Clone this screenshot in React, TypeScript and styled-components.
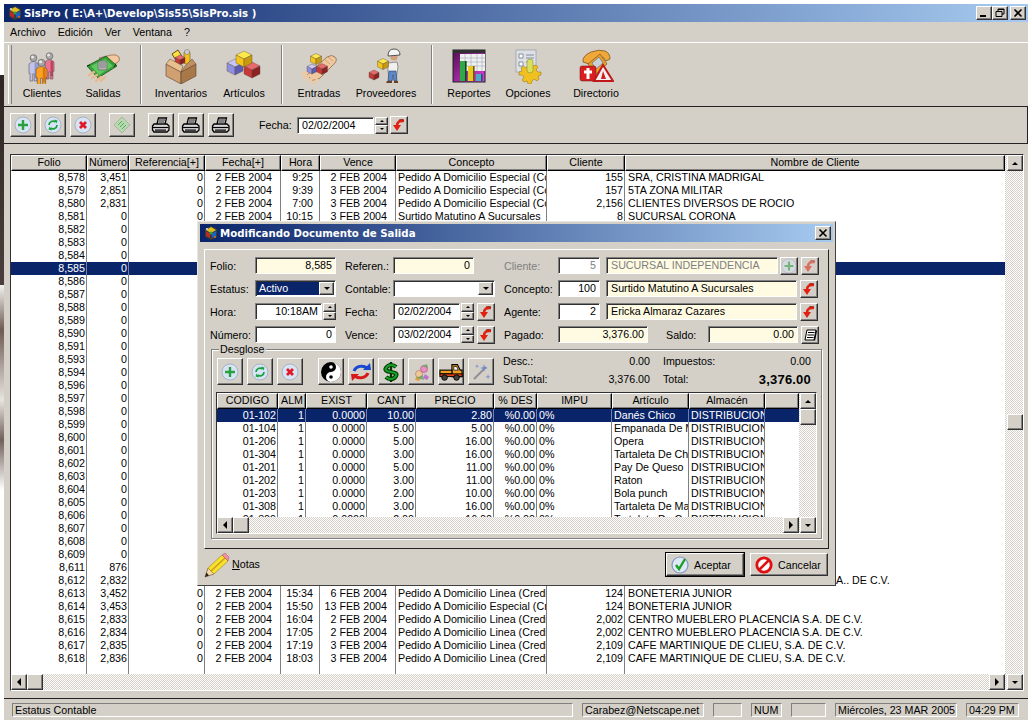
import React from "react";
import styled, { createGlobalStyle, css } from "styled-components";
import type { ReactNode } from "react";

const GRAY = "#d4d0c8";
const NAVY = "#0a246a";
const CREAM = "#fffbe3";

const GlobalStyle = createGlobalStyle`
  html, body { margin: 0; padding: 0; background: #fff; }
  body { font-family: "Liberation Sans", Arial, sans-serif; font-size: 10.7px; color: #000; }
  * { box-sizing: border-box; }
`;

const raised = css`
  border: 1px solid;
  border-color: #fff #303030 #303030 #fff;
  box-shadow: inset -1px -1px 0 #808080;
  background-color: ${GRAY};
`;

const sunken = css`
  border: 1px solid;
  border-color: #808080 #fff #fff #808080;
  box-shadow: inset 1px 1px 0 #303030;
`;

const hatch = css`
  background: conic-gradient(#fff 25%, ${GRAY} 0 50%, #fff 0 75%, ${GRAY} 0) 0 0 / 2px 2px;
`;

const Desktop = styled.div`
  position: relative;
  width: 1032px;
  height: 723px;
  overflow: hidden;
  padding: 4px 4px 3px 4px;
  background: linear-gradient(to bottom, #fff 75px, #2e2624 75px, #4a3f3c 285px, #f4f2f0 285px, #6d5a52 330px, #e8e4e0 400px, #70605a 440px, #fff 490px) 0 0 / 4px 100% no-repeat, #fff;
`;

const Window = styled.div`
  width: 1024px;
  height: 716px;
  background: ${GRAY};
  display: flex;
  flex-direction: column;
`;

const TitleBar = styled.div`
  height: 18px;
  flex: none;
  display: flex;
  align-items: center;
  gap: 1px;
  padding: 0 2px 0 3px;
  background: linear-gradient(to right, ${NAVY}, #a6caf0);
`;

const TitleText = styled.span`
  flex: 1;
  color: #fff;
  font: bold 10.2px "DejaVu Sans", Verdana, sans-serif;
  white-space: nowrap;
`;

const CaptionGroup = styled.div`
  display: flex;
`;

const CaptionButton = styled.div<{ $gap?: number }>`
  ${raised}
  width: 16px;
  height: 14px;
  margin-left: ${(p) => p.$gap ?? 0}px;
  display: flex;
  align-items: center;
  justify-content: center;
`;

const MenuBar = styled.div`
  height: 20px;
  flex: none;
  display: flex;
  align-items: center;
  gap: 12px;
  padding-left: 6px;
  border-bottom: 1px solid #fff;
  box-sizing: content-box;
`;

const Toolbar = styled.div`
  height: 63px;
  flex: none;
  display: flex;
  align-items: stretch;
  padding-left: 4px;
  border-bottom: 1px solid #222;
  box-sizing: content-box;
`;

const Grip = styled.div`
  width: 4px;
  margin: 2px 0;
  border-left: 1px solid #fff;
  border-right: 1px solid #808080;
`;

const ToolSep = styled.div<{ $ml: number; $mr: number }>`
  width: 2px;
  margin: 2px ${(p) => p.$mr}px 2px ${(p) => p.$ml}px;
  border-left: 1px solid #808080;
  border-right: 1px solid #fff;
`;

const ToolItem = styled.div<{ $w: number }>`
  width: ${(p) => p.$w}px;
  display: flex;
  flex-direction: column;
  align-items: center;
  padding-top: 5px;
  line-height: 14px;
  gap: 2px;
  white-space: nowrap;
  svg { display: block; }
`;

const ActionBar = styled.div`
  height: 37px;
  flex: none;
  display: flex;
  align-items: center;
  padding-left: 5px;
  border: solid #222;
  border-width: 0 1px 1px 0;
`;

const SquareBtn = styled.div<{ $w?: number; $h?: number; $ml?: number; $dim?: boolean }>`
  ${raised}
  flex: none;
  width: ${(p) => p.$w ?? 26}px;
  height: ${(p) => p.$h ?? 24}px;
  margin-left: ${(p) => p.$ml ?? 4}px;
  display: flex;
  align-items: center;
  justify-content: center;
  svg { opacity: ${(p) => (p.$dim ? 0.55 : 1)}; }
`;

const FechaLabel = styled.span`
  width: 38px;
  margin-left: 25px;
`;

const Field = styled.div<{ $w: number; $ml?: number; $cream?: boolean; $right?: boolean; $dim?: boolean }>`
  ${sunken}
  flex: none;
  width: ${(p) => p.$w}px;
  height: 17px;
  margin-left: ${(p) => p.$ml ?? 0}px;
  line-height: 15px;
  padding: 0 3px 0 4px;
  white-space: nowrap;
  overflow: hidden;
  background-color: ${(p) => (p.$cream ? CREAM : "#fff")};
  text-align: ${(p) => (p.$right ? "right" : "left")};
  color: ${(p) => (p.$dim ? "#808080" : "#000")};
`;

const SpinStack = styled.div`
  flex: none;
  width: 13px;
  height: 17px;
  margin-left: 1px;
  display: flex;
  flex-direction: column;
`;

const SpinPart = styled.div`
  ${raised}
  height: 8.5px;
  display: flex;
  align-items: center;
  justify-content: center;
`;

const Caret = styled.span<{ $dir: "up" | "down" | "left" | "right"; $s?: number }>`
  width: 0;
  height: 0;
  border: ${(p) => p.$s ?? 2}px solid transparent;
  ${(p) => p.$dir === "up" && css`border-bottom-color: #000; border-top-width: 0;`}
  ${(p) => p.$dir === "down" && css`border-top-color: #000; border-bottom-width: 0;`}
  ${(p) => p.$dir === "left" && css`border-right-color: #000; border-left-width: 0;`}
  ${(p) => p.$dir === "right" && css`border-left-color: #000; border-right-width: 0;`}
`;

const GridBox = styled.div<{ $h: number; $w: number; $ml: number; $mt?: number; $bar: number }>`
  width: ${(p) => p.$w}px;
  height: ${(p) => p.$h}px;
  margin: ${(p) => p.$mt ?? 0}px 0 0 ${(p) => p.$ml}px;
  flex: none;
  display: grid;
  grid-template-columns: 1fr ${(p) => p.$bar}px;
  grid-template-rows: 1fr 16px;
  border: 1px solid;
  border-color: #303030 #fff #fff #303030;
  overflow: hidden;
`;

const GridBody = styled.div`
  background: #fff;
  overflow: hidden;
  min-width: 0;
`;

const RowLine = styled.div<{ $cols: string; $sel?: boolean }>`
  display: grid;
  grid-template-columns: ${(p) => p.$cols};
  height: 13px;
  line-height: 12px;
  background: ${(p) => (p.$sel ? NAVY : "transparent")};
  color: ${(p) => (p.$sel ? "#fff" : "#000")};
`;

const Cell = styled.div<{ $align?: string; $pr?: number; $sel?: boolean }>`
  text-align: ${(p) => p.$align ?? "right"};
  padding: 0 ${(p) => p.$pr ?? 1}px 0 2px;
  overflow: hidden;
  white-space: nowrap;
  border-right: 1px solid ${(p) => (p.$sel ? "#6f82ad" : "#808080")};
  &:last-child { border-right-color: transparent; padding-left: 3px; }
`;

const HeadRow = styled.div<{ $cols: string }>`
  display: grid;
  grid-template-columns: ${(p) => p.$cols};
  height: 16px;
`;

const HeadCell = styled.div`
  ${raised}
  border-right-color: #000;
  border-bottom-color: #000;
  height: 16px;
  line-height: 13px;
  text-align: center;
  overflow: hidden;
  white-space: nowrap;
`;

const VScroll = styled.div`
  ${hatch}
  display: flex;
  flex-direction: column;
  align-items: flex-end;
`;

const ScrollBtn = styled.div`
  ${raised}
  flex: none;
  width: 16px;
  height: 16px;
  display: flex;
  align-items: center;
  justify-content: center;
`;

const ThumbV = styled.div<{ $top: number }>`
  ${raised}
  width: 16px;
  height: 16px;
  margin-top: ${(p) => p.$top}px;
`;

const HScroll = styled.div`
  ${hatch}
  display: flex;
  align-items: stretch;
`;

const HSpacer = styled.div`
  flex: 1;
`;

const ScrollCorner = styled.div`
  ${hatch}
  display: flex;
  justify-content: flex-end;
`;

const StatusBar = styled.div`
  margin-top: 7px;
  border-top: 1px solid #222;
  height: 21px;
  flex: none;
  display: flex;
  align-items: center;
  gap: 9px;
  padding: 2px 0 0 8px;
`;

const StatusPanel = styled.div<{ $w: number }>`
  width: ${(p) => p.$w}px;
  height: 14px;
  line-height: 12px;
  padding-left: 2px;
  border: 1px solid;
  border-color: #808080 #fff #fff #808080;
  white-space: nowrap;
  overflow: hidden;
`;

const Dialog = styled.div`
  position: absolute;
  left: 197px;
  top: 221px;
  width: 639px;
  height: 365px;
  padding: 2px;
  background: ${GRAY};
  border: 1px solid;
  border-color: #e8e6e0 #404040 #404040 #e8e6e0;
  display: flex;
  flex-direction: column;
`;

const Panel = styled.div`
  width: 625px;
  height: 300px;
  margin: 7px 0 0 4px;
  border: 1px solid;
  border-color: #fff #222 #222 #fff;
  padding: 7px 0 0 5px;
  flex: none;
`;

const FormArea = styled.div`
  display: flex;
  height: 92px;
`;

const FormColumn = styled.div<{ $w: number }>`
  width: ${(p) => p.$w}px;
  display: flex;
  flex-direction: column;
  gap: 6px;
`;

const FormRow = styled.div`
  display: flex;
  align-items: center;
  height: 17px;
`;

const FieldLabel = styled.span<{ $w: number; $ml?: number; $dim?: boolean }>`
  flex: none;
  width: ${(p) => p.$w}px;
  margin-left: ${(p) => p.$ml ?? 0}px;
  white-space: nowrap;
  color: ${(p) => (p.$dim ? "#808080" : "#000")};
`;

const Combo = styled.div<{ $w: number }>`
  ${sunken}
  flex: none;
  width: ${(p) => p.$w}px;
  height: 17px;
  padding: 1px;
  background-color: #fff;
  display: flex;
  line-height: 13px;
`;

const ComboValue = styled.div<{ $sel?: boolean }>`
  flex: 1;
  padding-left: 2px;
  background: ${(p) => (p.$sel ? NAVY : "transparent")};
  color: ${(p) => (p.$sel ? "#fff" : "#000")};
`;

const ComboBtn = styled.div`
  ${raised}
  width: 15px;
  display: flex;
  align-items: center;
  justify-content: center;
`;

const SmallBtn = styled(SquareBtn).attrs({ $w: 18, $h: 18 })``;

const Group = styled.div`
  position: relative;
  width: 611px;
  height: 190px;
  margin-left: 1px;
  border: 1px solid #808080;
  box-shadow: inset 1px 1px 0 #fff, 1px 1px 0 #fff;
  padding: 8px 0 0 4px;
`;

const GroupLegend = styled.span`
  position: absolute;
  left: 7px;
  top: -7px;
  padding: 0 1px;
  line-height: 13px;
  background: ${GRAY};
`;

const GroupTop = styled.div`
  display: flex;
  height: 28px;
  margin-bottom: 6px;
`;

const TotalsGrid = styled.div`
  margin: -3px 0 0 9px;
  width: 308px;
  display: grid;
  grid-template-columns: 147px 13px 148px;
  grid-template-rows: 13px 13px;
  row-gap: 5px;
`;

const TotalPair = styled.div<{ $col: number }>`
  grid-column: ${(p) => p.$col};
  display: flex;
  justify-content: space-between;
  line-height: 13px;
  white-space: nowrap;
  b { font-size: 13px; letter-spacing: 0.2px; }
`;

const Footer = styled.div`
  flex: 1;
  display: flex;
  align-items: center;
  padding: 0 5px 3px 4px;
`;

const NotesLink = styled.span`
  flex: 1;
  margin-left: 2px;
  padding-bottom: 1px;
  u { text-decoration: underline; }
`;

const DialogBtn = styled.div<{ $default?: boolean; $ml?: number }>`
  ${raised}
  width: 78px;
  height: 23px;
  margin-left: ${(p) => p.$ml ?? 0}px;
  display: flex;
  align-items: center;
  gap: 5px;
  padding-left: 4px;
  ${(p) => p.$default && css`outline: 1px solid #000; outline-offset: 0;`}
`;

const Svg = ({ s = 16, v = 16, children }: { s?: number; v?: number; children: ReactNode }) => (
  <svg width={s} height={s} viewBox={`0 0 ${v} ${v}`}>{children}</svg>
);

const Cube = ({ x, y, s, c }: { x: number; y: number; s: number; c: [string, string, string] }) => (
  <g stroke="#5a4a40" strokeWidth={0.4}>
    <polygon points={`${x},${y} ${x + s},${y - s / 2} ${x},${y - s} ${x - s},${y - s / 2}`} fill={c[0]} />
    <polygon points={`${x},${y} ${x - s},${y - s / 2} ${x - s},${y + s / 2} ${x},${y + s}`} fill={c[1]} />
    <polygon points={`${x},${y} ${x + s},${y - s / 2} ${x + s},${y + s / 2} ${x},${y + s}`} fill={c[2]} />
  </g>
);

const YEL: [string, string, string] = ["#ffe94a", "#f5c518", "#c89a10"];
const RED: [string, string, string] = ["#e86a6a", "#c83838", "#8c2222"];
const BLU: [string, string, string] = ["#c8c8f8", "#9090e0", "#5c5cb0"];

const Logo = () => (
  <Svg>
    <polygon points="8,1 14,4 14,12 8,15 2,12 2,4" fill="#3a3a3a" />
    <polygon points="8,2 13,5 8,8 3,5" fill="#e0c020" />
    <polygon points="3,6 7,8.5 7,13 3,11" fill="#c02828" />
    <polygon points="9,8.5 13,6 13,11 9,13" fill="#2060c0" />
    <circle cx="8" cy="8" r="1.6" fill="#30a040" />
    <circle cx="4" cy="4" r="1.1" fill="#d0d8e0" />
    <circle cx="12" cy="12" r="1" fill="#e07020" />
  </Svg>
);

const Person = ({ x, y, w, h, head, color, shade }: { x: number; y: number; w: number; h: number; head: number; color: string; shade: string }) => (
  <g>
    <path d={`M${x} ${y + 3}q${w / 2} -5 ${w} 0v${h * 0.55}h-${w * 0.12}v${h * 0.45}h-${w * 0.3}v-${h * 0.42}h-${w * 0.16}v${h * 0.42}h-${w * 0.3}v-${h * 0.45}h-${w * 0.12}z`} fill={color} stroke="#4a3a3a" strokeWidth={0.5} />
    <rect x={x + w * 0.62} y={y + 2} width={w * 0.26} height={h * 0.9} fill={shade} opacity={0.7} />
    <circle cx={x + w / 2} cy={y - head + 0.5} r={head} fill="#a8a8a8" stroke="#444" strokeWidth={0.5} />
    <circle cx={x + w / 2 - 1} cy={y - head - 0.5} r={head * 0.4} fill="#eee" />
  </g>
);

const IconClientes = () => (
  <Svg s={36} v={36}>
    <Person x={5} y={13} w={9} h={17} head={3.4} color="#c0c4ec" shade="#8088c0" />
    <Person x={21} y={11} w={9} h={17} head={3.4} color="#e87890" shade="#b02848" />
    <Person x={12} y={18} w={11} h={16} head={3.6} color="#ffa020" shade="#c86808" />
  </Svg>
);

const IconSalidas = () => (
  <Svg s={36} v={36}>
    <path d="M14 10l12 -3q6 -1 8 2t-2 6l-9 2z" fill="#f4c8a0" stroke="#7a5030" strokeWidth={0.6} />
    <polygon points="2,18 21,8 32,18 13,30" fill="#38a038" stroke="#104810" strokeWidth={0.7} />
    <polygon points="6,18 20,11 28,18 14,27" fill="#60c860" />
    <rect x="13" y="13" width="9" height="9" rx="2" fill="#b0b0b0" stroke="#505050" strokeWidth={0.5} />
    <path d="M14 15h7M14 17h7M14 19h7" stroke="#707070" strokeWidth={0.6} />
    <path d="M4 27l5 -3M7 30l5 -3M11 33l5 -4M16 33l4 -4" stroke="#e8b890" strokeWidth={2.4} strokeLinecap="round" />
    <path d="M2 18l3 -1M29 19l2 -3" stroke="#0a300a" strokeWidth={1} />
  </Svg>
);

const IconInventarios = () => (
  <Svg s={36} v={36}>
    <polygon points="9,6 15,2 20,10 14,14" fill="#ffe040" stroke="#403000" strokeWidth={0.8} />
    <rect x="21" y="3" width="6" height="13" rx="2" fill="#f4c020" stroke="#504010" strokeWidth={0.5} />
    <circle cx="24" cy="4" r="2.5" fill="#d0d0d0" stroke="#505050" strokeWidth={0.4} />
    <Cube x={17} y={12} s={5} c={RED} />
    <polygon points="3,16 18,24 18,36 3,28" fill="#d0a070" stroke="#5a4030" strokeWidth={0.6} />
    <polygon points="33,16 18,24 18,36 33,28" fill="#a87848" stroke="#5a4030" strokeWidth={0.6} />
    <polygon points="3,16 7,11 20,18 18,24" fill="#e8c090" stroke="#5a4030" strokeWidth={0.5} />
    <polygon points="33,16 29,11 22,18 18,24" fill="#c09060" stroke="#5a4030" strokeWidth={0.5} />
  </Svg>
);

const IconArticulos = () => (
  <Svg s={36} v={36}>
    <Cube x={9} y={19} s={8} c={BLU} />
    <Cube x={26} y={22} s={8} c={RED} />
    <Cube x={18} y={11} s={8} c={YEL} />
  </Svg>
);

const IconEntradas = () => (
  <Svg s={36} v={36}>
    <path d="M6 27l20 -18q5 -3 8 0t-1 7l-14 14q-4 3 -8 2z" fill="#f0c8a0" stroke="#704828" strokeWidth={0.6} />
    <path d="M2 26l6 -3M3 30l6 -3M7 33l5 -3M12 35l4 -3" stroke="#f0c8a0" strokeWidth={2.6} strokeLinecap="round" />
    <path d="M24 12l5 4M27 9l5 4" stroke="#c89870" strokeWidth={0.8} />
    <Cube x={11} y={21} s={5} c={BLU} />
    <Cube x={21} y={21} s={5.5} c={RED} />
    <Cube x={15} y={11} s={5.5} c={YEL} />
  </Svg>
);

const IconProveedores = () => (
  <Svg s={36} v={36}>
    <Cube x={6} y={27} s={5} c={RED} />
    <path d="M20 15l9 -1 1 5 -2 12h-7l-1 -8z" fill="#f0f0f0" stroke="#404040" strokeWidth={0.5} />
    <path d="M21 23h7l1 10h-3l-1 -6 -1 6h-4z" fill="#5a88c8" stroke="#203050" strokeWidth={0.5} />
    <path d="M19 33h5v2h-6zM26 33h4v2h-4z" fill="#6a4020" />
    <circle cx="26" cy="9" r="3.6" fill="#d0a080" />
    <path d="M20 8q0 -7 6 -7t6 6z" fill="#f4f4f4" stroke="#303030" strokeWidth={0.8} />
    <Cube x={15} y={16} s={5.5} c={YEL} />
  </Svg>
);

const Bar = ({ x, y, w, h, c, d }: { x: number; y: number; w: number; h: number; c: string; d: string }) => (
  <g>
    <rect x={x} y={y} width={w} height={h} fill={c} />
    <rect x={x + w} y={y} width={1.6} height={h} fill={d} />
  </g>
);

const IconReportes = () => (
  <Svg s={36} v={36}>
    <defs>
      <linearGradient id="rp" x1="0" y1="0" x2="1" y2="1">
        <stop offset="0" stopColor="#501050" />
        <stop offset="1" stopColor="#e040e0" />
      </linearGradient>
    </defs>
    <rect x="2" y="2" width="32" height="32" fill="url(#rp)" stroke="#222" />
    <rect x="2" y="2" width="32" height="3" fill="#303030" />
    <rect x="9" y="6" width="25" height="17" fill="#f0f0f0" />
    <path d="M9 10h25M9 14h25M9 18h25M14 6v17M20 6v17M26 6v17M31 6v17" stroke="#a0a8b8" strokeWidth={0.6} />
    <Bar x={9} y={13} w={5} h={20} c="#30a848" d="#104818" />
    <Bar x={17} y={18} w={5} h={15} c="#e8c820" d="#705c08" />
    <Bar x={25} y={26} w={5} h={7} c="#50a8c8" d="#205868" />
  </Svg>
);

const IconOpciones = () => (
  <Svg s={36} v={36}>
    <rect x="6" y="2" width="20" height="22" fill="#dde0e4" stroke="#8890a0" strokeWidth={0.6} />
    <path d="M9 6h4v4h-4zM9 14h4v4h-4zM16 7h8M16 10h8M16 14h6" stroke="#707888" strokeWidth={0.8} fill="#fff" />
    <path d="M20 16l3 0 1 3 3 -1 2 2 -2 3 2 2 3 0 0 3 -3 1 1 3 -2 2 -3 -2 -2 2 -1 3 -3 0 -1 -3 -3 1 -2 -2 2 -3 -2 -2 -3 0 0 -3 3 -1 -1 -3 2 -2 3 2z" fill="#f0c020" stroke="#906c10" strokeWidth={0.5} transform="translate(-1 -1)" />
    <rect x="17" y="11" width="6" height="14" rx="3" fill="#d8e060" stroke="#808020" strokeWidth={0.5} />
  </Svg>
);

const IconDirectorio = () => (
  <Svg s={36} v={36}>
    <path d="M5 14q-1 -6 8 -10 8 -3 14 -1 5 2 5 8l-4 2q-2 -5 -6 -4l-8 8z" fill="#f0a838" stroke="#704810" strokeWidth={0.7} />
    <polygon points="10,16 22,6 29,16 17,27" fill="#e8a030" stroke="#704810" strokeWidth={0.6} />
    <polygon points="14,15 21,9 25,15 18,21" fill="#c8d0d8" stroke="#505050" strokeWidth={0.5} />
    <rect x="2" y="18" width="16" height="15" rx="2" fill="#d82020" stroke="#701010" strokeWidth={0.5} />
    <path d="M10 20v11M6 24h8" stroke="#fff" strokeWidth={3} />
    <polygon points="25,17 35,33 16,33" fill="#f8f0f0" stroke="#c01818" strokeWidth={2} />
    <path d="M23 31l2 -8 3 8z" fill="#d02020" />
  </Svg>
);

const Ball = ({ children }: { children: ReactNode }) => (
  <Svg s={18} v={18}>
    <circle cx="9" cy="9" r="8" fill="#d8e4f4" stroke="#98a8c0" strokeWidth={0.8} />
    {children}
  </Svg>
);

const PlusIcon = () => (
  <Ball>
    <path d="M9 4v10M4 9h10" stroke="#28a040" strokeWidth={2.4} />
  </Ball>
);

const RefreshIcon = () => (
  <Ball>
    <path d="M5 9a4 4 0 0 1 6.5 -3M13 9a4 4 0 0 1 -6.5 3" fill="none" stroke="#18a040" strokeWidth={1.8} />
    <path d="M10 3.5l3.5 1 -1 3zM8 14.5l-3.5 -1 1 -3z" fill="#18a040" />
  </Ball>
);

const CrossIcon = () => (
  <Ball>
    <path d="M6 6l6 6M12 6l-6 6" stroke="#e01828" strokeWidth={2.8} />
  </Ball>
);

const DiamondIcon = () => (
  <Svg s={18} v={18}>
    <polygon points="9,1 17,9 9,17 1,9" fill="#b8d8b0" stroke="#809880" strokeWidth={0.5} />
    <path d="M5 9l4 -4M7 11l4 -4M9 13l4 -4" stroke="#58a860" strokeWidth={1} />
  </Svg>
);

const PrinterIcon = () => (
  <Svg s={20} v={20}>
    <path d="M6 9l1.5 -6h8l-1.5 6" fill="#fff" stroke="#000" strokeWidth={1.3} />
    <path d="M8 5h6M7.5 7h6" stroke="#000" />
    <path d="M3 9h13l2 2v4l-2 2h-13l-1.5 -2v-4z" fill="#d8d8d8" stroke="#000" strokeWidth={1.3} />
    <path d="M2 12.5h15.5" stroke="#000" strokeWidth={1.2} />
    <rect x="4" y="14.5" width="11" height="1.2" fill="#000" />
  </Svg>
);

const UndoIcon = ({ s = 14 }: { s?: number }) => (
  <Svg s={s} v={14}>
    <path d="M12 3q-7 -1 -7 5" fill="none" stroke="#e02010" strokeWidth={2.6} />
    <polygon points="1,7 9,7 5,13" fill="#e02010" />
    <path d="M12 2q-3 -1 -5 0" fill="none" stroke="#801008" strokeWidth={0.8} />
  </Svg>
);

const YinYangIcon = () => (
  <Svg s={22} v={22}>
    <circle cx="11" cy="11" r="10" fill="#000" />
    <path d="M11 1a10 10 0 0 1 0 20a5 5 0 0 1 0 -10a5 5 0 0 0 0 -10z" fill="#fff" />
    <circle cx="11" cy="6" r="1.8" fill="#fff" />
    <circle cx="11" cy="16" r="1.8" fill="#000" />
  </Svg>
);

const SwapIcon = () => (
  <Svg s={22} v={22}>
    <path d="M4 10a8 7 0 0 1 13 -3" fill="none" stroke="#1848d0" strokeWidth={3} />
    <polygon points="13,9 21,9 20,2" fill="#1848d0" />
    <path d="M18 12a8 7 0 0 1 -13 3" fill="none" stroke="#d81818" strokeWidth={3} />
    <polygon points="9,13 1,13 2,20" fill="#d81818" />
  </Svg>
);

const DollarIcon = () => (
  <Svg s={22} v={22}>
    <path d="M11 1v20" stroke="#003800" strokeWidth={2.4} />
    <path d="M16 6q-2 -2 -5 -2t-5 3 5 4 5 4 -5 3 -5 -2" fill="none" stroke="#003800" strokeWidth={4.2} />
    <path d="M16 6q-2 -2 -5 -2t-5 3 5 4 5 4 -5 3 -5 -2" fill="none" stroke="#18a028" strokeWidth={2} />
  </Svg>
);

const FacesIcon = () => (
  <Svg s={22} v={22}>
    <path d="M5 19l3 -8 4 4 -3 5z" fill="#e8a040" />
    <circle cx="9" cy="13" r="3.5" fill="#f0c8a0" stroke="#a06030" strokeWidth={0.5} />
    <circle cx="14" cy="8" r="3.5" fill="#e890c0" stroke="#a03070" strokeWidth={0.5} />
    <path d="M12 5l5 -2 1 4zM6 17l8 2 -1 -5" fill="#60a860" opacity={0.8} />
    <path d="M15 13l4 3 -2 3 -4 -2z" fill="#c070d0" />
  </Svg>
);

const TruckIcon = () => (
  <Svg s={24} v={26}>
    <path d="M14 5h6l3 6h2v7h-11z" fill="#f0a020" stroke="#000" strokeWidth={1.2} />
    <path d="M16 7h3l2 4h-5z" fill="#fff" stroke="#000" strokeWidth={0.8} />
    <rect x="1" y="11" width="13" height="4" fill="#f0a020" stroke="#000" strokeWidth={1.2} />
    <rect x="1" y="15" width="24" height="3" fill="#e04010" stroke="#000" strokeWidth={1} />
    <circle cx="6" cy="19" r="3" fill="#404040" stroke="#000" />
    <circle cx="19" cy="19" r="3" fill="#404040" stroke="#000" />
  </Svg>
);

const WandIcon = () => (
  <Svg s={22} v={22}>
    <path d="M4 18l12 -12" stroke="#909098" strokeWidth={2} />
    <path d="M14 3l1 3 3 1 -3 1 -1 3 -1 -3 -3 -1 3 -1z" fill="#6080d0" opacity={0.7} />
    <path d="M18 13l.7 2 2 .7 -2 .7 -.7 2 -.7 -2 -2 -.7 2 -.7z" fill="#9098c8" />
    <path d="M7 3l.6 1.6 1.6 .6 -1.6 .6 -.6 1.6 -.6 -1.6 -1.6 -.6 1.6 -.6z" fill="#9098c8" />
  </Svg>
);

const SheetIcon = () => (
  <Svg s={14} v={14}>
    <path d="M4 2h9l-2 10h-9z" fill="#fff" stroke="#000" />
    <path d="M5 4.5h6.5M4.5 7h6.5M4 9.5h6.5" stroke="#000" strokeWidth={1.2} />
    <path d="M11 12l2 -10 1 1 -2 10z" fill="#000" />
  </Svg>
);

const CheckIcon = () => (
  <Svg s={18} v={18}>
    <circle cx="9" cy="9" r="8" fill="#dfe8f4" stroke="#8098c0" strokeWidth={1.2} />
    <path d="M5 9l3 4 6 -10" fill="none" stroke="#18a028" strokeWidth={2.4} />
  </Svg>
);

const ForbidIcon = () => (
  <Svg s={18} v={18}>
    <circle cx="9" cy="9" r="7.2" fill="#fff" stroke="#e01010" strokeWidth={2.8} />
    <path d="M4 14l10 -10" stroke="#e01010" strokeWidth={2.6} />
  </Svg>
);

const PencilIcon = () => (
  <Svg s={26} v={26}>
    <polygon points="1,25 4,16 10,22" fill="#f4d8a8" stroke="#403010" strokeWidth={0.5} />
    <polygon points="1,25 2.5,20.5 5,23.5" fill="#302010" />
    <polygon points="4,16 18,3 24,9 10,22" fill="#f8e030" stroke="#a08010" strokeWidth={0.6} />
    <path d="M7 19l14 -13" stroke="#c8a010" strokeWidth={1.4} />
    <polygon points="18,3 21,1 25,5 24,9" fill="#f090a0" stroke="#a05060" strokeWidth={0.5} />
  </Svg>
);

const mainCols = "76px 42px 76px 76px 39px 76px 151px 78px 1fr";
const mainHead = ["Folio", "Número", "Referencia[+]", "Fecha[+]", "Hora", "Vence", "Concepto", "Cliente", "Nombre de Cliente"];
const mainAlign = ["right", "right", "right", "right", "right", "right", "left", "right", "left"];
const mainPad = [1, 1, 1, 8, 6, 8, 0, 1, 0];

const C1 = "Pedido A Domicilio Especial (Contado)";
const L1 = "Pedido A Domicilio Linea (Credito)";
const E1 = "Pedido A Domicilio Especial (Credito)";
const S1 = "Surtido Matutino A Sucursales";

const blank = (folio: string, num = "0") => [folio, num, "", "", "", "", "", "", ""];

const mainRows: string[][] = [
  ["8,578", "3,451", "0", "2 FEB 2004", "9:25", "2 FEB 2004", C1, "155", "SRA, CRISTINA MADRIGAL"],
  ["8,579", "2,851", "0", "2 FEB 2004", "9:39", "3 FEB 2004", C1, "157", "5TA ZONA MILITAR"],
  ["8,580", "2,831", "0", "2 FEB 2004", "7:00", "3 FEB 2004", C1, "2,156", "CLIENTES DIVERSOS DE ROCIO"],
  ["8,581", "0", "0", "2 FEB 2004", "10:15", "3 FEB 2004", S1, "8", "SUCURSAL CORONA"],
  ...["8,582", "8,583", "8,584", "8,585", "8,586", "8,587", "8,588", "8,589", "8,590", "8,591", "8,593", "8,594", "8,596", "8,597", "8,598", "8,599", "8,600", "8,601", "8,602", "8,603", "8,604", "8,605", "8,606", "8,607", "8,608", "8,609"].map((f) => blank(f)),
  blank("8,611", "876"),
  ["8,612", "2,832", "", "", "", "", "", "", "COMERCIAL MUEBLERAS PLACENCIA S.A.. DE C.V."],
  ["8,613", "3,452", "0", "2 FEB 2004", "15:34", "6 FEB 2004", L1, "124", "BONETERIA JUNIOR"],
  ["8,614", "3,453", "0", "2 FEB 2004", "15:50", "13 FEB 2004", E1, "124", "BONETERIA JUNIOR"],
  ["8,615", "2,833", "0", "2 FEB 2004", "16:04", "2 FEB 2004", L1, "2,002", "CENTRO MUEBLERO PLACENCIA S.A. DE C.V."],
  ["8,616", "2,834", "0", "2 FEB 2004", "17:05", "2 FEB 2004", L1, "2,002", "CENTRO MUEBLERO PLACENCIA S.A. DE C.V."],
  ["8,617", "2,835", "0", "2 FEB 2004", "17:19", "3 FEB 2004", L1, "2,109", "CAFE MARTINIQUE DE CLIEU, S.A. DE C.V."],
  ["8,618", "2,836", "0", "2 FEB 2004", "18:03", "3 FEB 2004", L1, "2,109", "CAFE MARTINIQUE DE CLIEU, S.A. DE C.V."],
  ["", "", "", "", "", "", "", "", ""],
  ["", "", "", "", "", "", "", "", ""],
];

const detailCols = "61px 28px 61px 49px 78px 43px 75px 77px 76px 1fr";
const detailHead = ["CODIGO", "ALM", "EXIST", "CANT", "PRECIO", "% DES", "IMPU", "Artículo", "Almacén", ""];
const detailAlign = ["right", "right", "right", "right", "right", "right", "left", "left", "left", "left"];

const detailRows: string[][] = [
  ["01-102", "10.00", "2.80", "Danés Chico"],
  ["01-104", "5.00", "5.00", "Empanada De Manzana"],
  ["01-206", "5.00", "16.00", "Opera"],
  ["01-304", "3.00", "16.00", "Tartaleta De Chocolate"],
  ["01-201", "5.00", "11.00", "Pay De Queso"],
  ["01-202", "3.00", "11.00", "Raton"],
  ["01-203", "2.00", "10.00", "Bola punch"],
  ["01-308", "3.00", "16.00", "Tartaleta De Manzana"],
  ["01-309", "2.00", "16.00", "Tartaleta De Cereza"],
].map(([code, cant, precio, art]) => [code, "1", "0.0000", cant, precio, "%0.00", "0%", art, "DISTRIBUCION", ""]);

const Spin = () => (
  <SpinStack>
    <SpinPart><Caret $dir="up" /></SpinPart>
    <SpinPart><Caret $dir="down" /></SpinPart>
  </SpinStack>
);

const tools = [
  { label: "Clientes", w: 60, icon: <IconClientes /> },
  { label: "Salidas", w: 62, icon: <IconSalidas /> },
  { label: "Inventarios", w: 62, icon: <IconInventarios />, sep: [6, 8] },
  { label: "Artículos", w: 64, icon: <IconArticulos /> },
  { label: "Entradas", w: 66, icon: <IconEntradas />, sep: [5, 3] },
  { label: "Proveedores", w: 68, icon: <IconProveedores /> },
  { label: "Reportes", w: 62, icon: <IconReportes />, sep: [11, 5] },
  { label: "Opciones", w: 56, icon: <IconOpciones /> },
  { label: "Directorio", w: 80, icon: <IconDirectorio /> },
];

export default function App() {
  return (
    <Desktop>
      <GlobalStyle />
      <Window>
        <TitleBar>
          <Logo />
          <TitleText>SisPro ( E:\A+\Develop\Sis55\SisPro.sis )</TitleText>
          <CaptionGroup>
            <CaptionButton>
              <Svg s={10} v={10}><rect x="1" y="7" width="6" height="2" fill="#000" /></Svg>
            </CaptionButton>
            <CaptionButton>
              <Svg s={10} v={10}><path d="M3 3V1h6v5H7M1 3.5h6v5H1z" fill="none" stroke="#000" /><path d="M3 1.5h6M1 3.5h6" stroke="#000" /></Svg>
            </CaptionButton>
            <CaptionButton $gap={2}>
              <Svg s={10} v={10}><path d="M1.5 1.5l7 7M8.5 1.5l-7 7" stroke="#000" strokeWidth={1.6} /></Svg>
            </CaptionButton>
          </CaptionGroup>
        </TitleBar>

        <MenuBar>
          <span>Archivo</span>
          <span>Edición</span>
          <span>Ver</span>
          <span>Ventana</span>
          <span>?</span>
        </MenuBar>

        <Toolbar>
          <Grip />
          {tools.map((t) => (
            <React.Fragment key={t.label}>
              {t.sep && <ToolSep $ml={t.sep[0]} $mr={t.sep[1]} />}
              <ToolItem $w={t.w}>
                {t.icon}
                <span>{t.label}</span>
              </ToolItem>
            </React.Fragment>
          ))}
        </Toolbar>

        <ActionBar>
          <SquareBtn $ml={1}><PlusIcon /></SquareBtn>
          <SquareBtn><RefreshIcon /></SquareBtn>
          <SquareBtn><CrossIcon /></SquareBtn>
          <SquareBtn $ml={13}><DiamondIcon /></SquareBtn>
          <SquareBtn $ml={13}><PrinterIcon /></SquareBtn>
          <SquareBtn><PrinterIcon /></SquareBtn>
          <SquareBtn><PrinterIcon /></SquareBtn>
          <FechaLabel>Fecha:</FechaLabel>
          <Field $w={77}>02/02/2004</Field>
          <Spin />
          <SmallBtn $ml={2}><UndoIcon /></SmallBtn>
        </ActionBar>

        <GridBox $w={1014} $h={537} $ml={6} $mt={10} $bar={18}>
          <GridBody>
            <HeadRow $cols={mainCols}>
              {mainHead.map((h) => <HeadCell key={h}>{h}</HeadCell>)}
            </HeadRow>
            {mainRows.map((r, i) => {
              const sel = r[0] === "8,585";
              return (
                <RowLine key={i} $cols={mainCols} $sel={sel}>
                  {r.map((v, j) => (
                    <Cell key={j} $align={mainAlign[j]} $pr={mainPad[j]} $sel={sel}>{v}</Cell>
                  ))}
                </RowLine>
              );
            })}
          </GridBody>
          <VScroll>
            <ScrollBtn><Caret $dir="up" $s={3} /></ScrollBtn>
            <ThumbV $top={243} />
          </VScroll>
          <HScroll>
            <ScrollBtn><Caret $dir="left" $s={4} /></ScrollBtn>
            <ScrollBtn />
            <HSpacer />
            <ScrollBtn><Caret $dir="right" $s={4} /></ScrollBtn>
          </HScroll>
          <ScrollCorner>
            <ScrollBtn><Caret $dir="down" $s={3} /></ScrollBtn>
          </ScrollCorner>
        </GridBox>

        <StatusBar>
          <StatusPanel $w={561}>Estatus Contable</StatusPanel>
          <StatusPanel $w={122}>Carabez@Netscape.net</StatusPanel>
          <StatusPanel $w={29} />
          <StatusPanel $w={31}>NUM</StatusPanel>
          <StatusPanel $w={35} />
          <StatusPanel $w={122}>Miércoles, 23 MAR 2005</StatusPanel>
          <StatusPanel $w={53}>04:29 PM</StatusPanel>
        </StatusBar>
      </Window>

      <Dialog>
        <TitleBar>
          <Logo />
          <TitleText>Modificando Documento de Salida</TitleText>
          <CaptionButton>
            <Svg s={10} v={10}><path d="M1.5 1.5l7 7M8.5 1.5l-7 7" stroke="#000" strokeWidth={1.6} /></Svg>
          </CaptionButton>
        </TitleBar>

        <Panel>
          <FormArea>
            <FormColumn $w={135}>
              <FormRow><FieldLabel $w={45}>Folio:</FieldLabel><Field $w={81} $cream $right>8,585</Field></FormRow>
              <FormRow>
                <FieldLabel $w={45}>Estatus:</FieldLabel>
                <Combo $w={81}><ComboValue $sel>Activo</ComboValue><ComboBtn><Caret $dir="down" $s={3} /></ComboBtn></Combo>
              </FormRow>
              <FormRow><FieldLabel $w={45}>Hora:</FieldLabel><Field $w={67} $right>10:18AM</Field><Spin /></FormRow>
              <FormRow><FieldLabel $w={45}>Número:</FieldLabel><Field $w={81} $right>0</Field></FormRow>
            </FormColumn>
            <FormColumn $w={159}>
              <FormRow><FieldLabel $w={48}>Referen.:</FieldLabel><Field $w={81} $cream $right>0</Field></FormRow>
              <FormRow>
                <FieldLabel $w={48}>Contable:</FieldLabel>
                <Combo $w={102}><ComboValue /><ComboBtn><Caret $dir="down" $s={3} /></ComboBtn></Combo>
              </FormRow>
              <FormRow><FieldLabel $w={48}>Fecha:</FieldLabel><Field $w={67}>02/02/2004</Field><Spin /><SmallBtn $ml={3}><UndoIcon /></SmallBtn></FormRow>
              <FormRow><FieldLabel $w={48}>Vence:</FieldLabel><Field $w={67}>03/02/2004</Field><Spin /><SmallBtn $ml={3}><UndoIcon /></SmallBtn></FormRow>
            </FormColumn>
            <FormColumn $w={320}>
              <FormRow>
                <FieldLabel $w={54} $dim>Cliente:</FieldLabel>
                <Field $w={42} $right $dim>5</Field>
                <Field $w={172} $ml={6} $cream $dim>SUCURSAL INDEPENDENCIA</Field>
                <SmallBtn $ml={2} $dim><PlusIcon /></SmallBtn>
                <SmallBtn $ml={3} $dim><UndoIcon /></SmallBtn>
              </FormRow>
              <FormRow>
                <FieldLabel $w={54}>Concepto:</FieldLabel>
                <Field $w={42} $right>100</Field>
                <Field $w={191} $ml={6} $cream>Surtido Matutino A Sucursales</Field>
                <SmallBtn $ml={3}><UndoIcon /></SmallBtn>
              </FormRow>
              <FormRow>
                <FieldLabel $w={54}>Agente:</FieldLabel>
                <Field $w={42} $right>2</Field>
                <Field $w={191} $ml={6} $cream>Ericka Almaraz Cazares</Field>
                <SmallBtn $ml={3}><UndoIcon /></SmallBtn>
              </FormRow>
              <FormRow>
                <FieldLabel $w={54}>Pagado:</FieldLabel>
                <Field $w={90} $cream $right>3,376.00</Field>
                <FieldLabel $w={42} $ml={18}>Saldo:</FieldLabel>
                <Field $w={90} $cream $right>0.00</Field>
                <SmallBtn $ml={3}><SheetIcon /></SmallBtn>
              </FormRow>
            </FormColumn>
          </FormArea>

          <Group>
            <GroupLegend>Desglose</GroupLegend>
            <GroupTop>
              <SquareBtn $ml={1} $h={27}><PlusIcon /></SquareBtn>
              <SquareBtn $h={27}><RefreshIcon /></SquareBtn>
              <SquareBtn $h={27}><CrossIcon /></SquareBtn>
              <SquareBtn $ml={15} $h={27}><YinYangIcon /></SquareBtn>
              <SquareBtn $h={27}><SwapIcon /></SquareBtn>
              <SquareBtn $h={27}><DollarIcon /></SquareBtn>
              <SquareBtn $h={27}><FacesIcon /></SquareBtn>
              <SquareBtn $h={27}><TruckIcon /></SquareBtn>
              <SquareBtn $h={27}><WandIcon /></SquareBtn>
              <TotalsGrid>
                <TotalPair $col={1}><span>Desc.:</span><span>0.00</span></TotalPair>
                <TotalPair $col={3}><span>Impuestos:</span><span>0.00</span></TotalPair>
                <TotalPair $col={1}><span>SubTotal:</span><span>3,376.00</span></TotalPair>
                <TotalPair $col={3}><span>Total:</span><b>3,376.00</b></TotalPair>
              </TotalsGrid>
            </GroupTop>
            <GridBox $w={601} $h={142} $ml={0} $bar={17}>
              <GridBody>
                <HeadRow $cols={detailCols}>
                  {detailHead.map((h) => <HeadCell key={h}>{h}</HeadCell>)}
                </HeadRow>
                {detailRows.map((r, i) => (
                  <RowLine key={i} $cols={detailCols} $sel={i === 0}>
                    {r.map((v, j) => (
                      <Cell key={j} $align={detailAlign[j]} $sel={i === 0}>{v}</Cell>
                    ))}
                  </RowLine>
                ))}
              </GridBody>
              <VScroll>
                <ScrollBtn><Caret $dir="up" $s={3} /></ScrollBtn>
                <ThumbV $top={0} />
              </VScroll>
              <HScroll>
                <ScrollBtn><Caret $dir="left" $s={4} /></ScrollBtn>
                <ScrollBtn />
                <HSpacer />
                <ScrollBtn><Caret $dir="right" $s={4} /></ScrollBtn>
              </HScroll>
              <ScrollCorner>
                <ScrollBtn><Caret $dir="down" $s={3} /></ScrollBtn>
              </ScrollCorner>
            </GridBox>
          </Group>
        </Panel>

        <Footer>
          <PencilIcon />
          <NotesLink><u>N</u>otas</NotesLink>
          <DialogBtn $default><CheckIcon />Aceptar</DialogBtn>
          <DialogBtn $ml={6}><ForbidIcon />Cancelar</DialogBtn>
        </Footer>
      </Dialog>
    </Desktop>
  );
}
